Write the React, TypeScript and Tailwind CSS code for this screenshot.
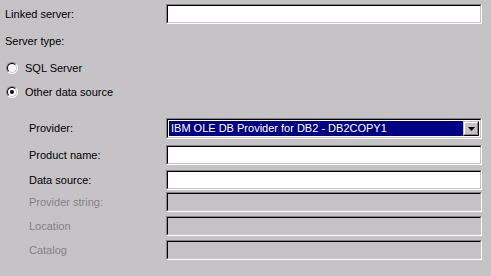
import React from "react";

const BG = "bg-[#c6c3c6]";

function Sunken({ disabled, className = "", children }: { disabled?: boolean; className?: string; children?: React.ReactNode }) {
  return (
    <div
      className={`w-[316px] border border-t-[#848284] border-l-[#848284] border-b-white border-r-white ${className}`}
    >
      <div
        className={`h-full border border-t-black border-l-black border-b-[#c6c3c6] border-r-[#c6c3c6] ${
          disabled ? BG : "bg-white"
        }`}
      >
        {children}
      </div>
    </div>
  );
}

function Radio({ checked }: { checked?: boolean }) {
  return (
    <div className="relative w-[12px] h-[12px] rounded-full bg-white border border-t-[#848284] border-l-[#848284] border-b-white border-r-white">
      <div className="absolute inset-0 rounded-full border border-t-black border-l-black border-b-[#c6c3c6] border-r-[#c6c3c6]" />
      {checked && <div className="absolute left-[3px] top-[3px] w-[4px] h-[4px] rounded-full bg-black" />}
    </div>
  );
}

function Row({ label, disabled, mt, indent = true, children }: { label: string; disabled?: boolean; mt: string; indent?: boolean; children: React.ReactNode }) {
  return (
    <div className={`flex items-center ${mt}`}>
      <div
        className={`w-[166px] ${indent ? "pl-[29px]" : "pl-[5px]"} ${disabled ? "text-[#848284]" : "text-black"}`}
      >
        {label}
      </div>
      {children}
    </div>
  );
}

export default function App() {
  return (
    <div
      className={`w-[491px] h-[276px] overflow-hidden ${BG} text-[11px] leading-[13px] text-black pt-[4px]`}
      style={{ fontFamily: '"Liberation Sans", Arial, sans-serif' }}
    >
      <Row label="Linked server:" mt="mt-0" indent={false}>
        <Sunken className="h-[20px]" />
      </Row>

      <div className="mt-[11px] pl-[5px] h-[13px]">Server type:</div>

      <div className="mt-[14px] flex items-center gap-[7px] pl-[6px] h-[12px]">
        <Radio />
        <span>SQL Server</span>
      </div>
      <div className="mt-[12px] flex items-center gap-[7px] pl-[6px] h-[12px]">
        <Radio checked />
        <span>Other data source</span>
      </div>

      <Row label="Provider:" mt="mt-[20px]">
        <Sunken className="h-[21px]">
          <div className="flex h-full items-stretch p-[1px]">
            <div className="flex-1 bg-[#000084] text-white pl-[2px] flex items-center">
              IBM OLE DB Provider for DB2 - DB2COPY1
            </div>
            <div className="w-[16px] bg-[#c6c3c6] border border-t-[#c6c3c6] border-l-[#c6c3c6] border-b-black border-r-black">
              <div className="h-full border border-t-white border-l-white border-b-[#848284] border-r-[#848284] flex items-center justify-center">
                <svg width="7" height="4" viewBox="0 0 7 4">
                  <path d="M0 0h7L3.5 4z" fill="black" />
                </svg>
              </div>
            </div>
          </div>
        </Sunken>
      </Row>

      <Row label="Product name:" mt="mt-[6px]">
        <Sunken className="h-[20px]" />
      </Row>
      <Row label="Data source:" mt="mt-[5px]">
        <Sunken className="h-[20px]" />
      </Row>
      <Row label="Provider string:" mt="mt-[2px]" disabled>
        <Sunken className="h-[20px]" disabled />
      </Row>
      <Row label="Location" mt="mt-[4px]" disabled>
        <Sunken className="h-[20px]" disabled />
      </Row>
      <Row label="Catalog" mt="mt-[4px]" disabled>
        <Sunken className="h-[20px]" disabled />
      </Row>
    </div>
  );
}
